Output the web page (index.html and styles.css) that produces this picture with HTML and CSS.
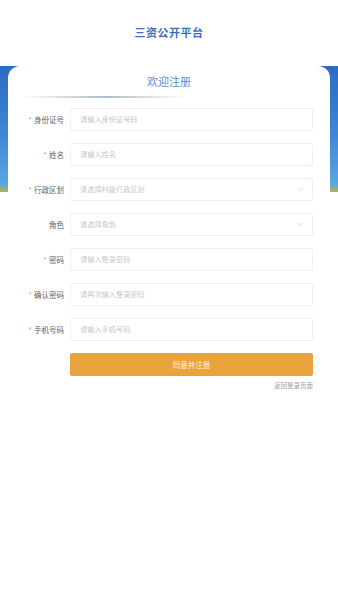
FILE: index.html
```html
<!DOCTYPE html>
<html lang="zh">
<head>
  <meta charset="UTF-8" />
  <meta name="viewport" content="width=device-width, initial-scale=1.0" />
  <title>三资公开平台 - 注册</title>
  <link rel="stylesheet" href="styles.css">
</head>
<body>
  <div class="top">三资公开平台</div>

  <div class="stage">
    <div class="card">
      <div class="welcome">欢迎注册</div>
      <div class="line"></div>

      <div class="row">
        <label><span class="req">*</span>身份证号</label>
        <div class="field"><span class="ph">请输入身份证号码</span></div>
      </div>
      <div class="row">
        <label><span class="req">*</span>姓名</label>
        <div class="field"><span class="ph">请输入姓名</span></div>
      </div>
      <div class="row">
        <label><span class="req">*</span>行政区划</label>
        <div class="field"><span class="ph">请选择村级行政区划</span>
          <svg class="arrow" width="7" height="5" viewBox="0 0 7 5"><path d="M0.5 1 L3.5 4 L6.5 1" fill="none" stroke="#cfcfcf" stroke-width="0.8"/></svg>
        </div>
      </div>
      <div class="row">
        <label>角色</label>
        <div class="field"><span class="ph">请选择角色</span>
          <svg class="arrow" width="7" height="5" viewBox="0 0 7 5"><path d="M0.5 1 L3.5 4 L6.5 1" fill="none" stroke="#cfcfcf" stroke-width="0.8"/></svg>
        </div>
      </div>
      <div class="row">
        <label><span class="req">*</span>密码</label>
        <div class="field"><span class="ph">请输入登录密码</span></div>
      </div>
      <div class="row">
        <label><span class="req">*</span>确认密码</label>
        <div class="field"><span class="ph">请再次输入登录密码</span></div>
      </div>
      <div class="row">
        <label><span class="req">*</span>手机号码</label>
        <div class="field"><span class="ph">请输入手机号码</span></div>
      </div>

      <div class="row">
        <span></span>
        <button class="submit">同意并注册</button>
      </div>
      <div class="back">返回登录页面</div>
    </div>
  </div>
</body>
</html>
```

FILE: styles.css
```css
body {
  margin: 0;
  font-family: "Noto Sans CJK SC", "Noto Sans", sans-serif;
  background-color: #fff;
  color: #555;
}
.top {
  height: 66px;
  line-height: 64px;
  text-align: center;
  font-size: 11px;
  font-weight: bold;
  color: #3871b3;
  letter-spacing: 0.5px;
}
.stage {
  padding: 0 8px;
  background: linear-gradient(to bottom, #2c6bbf 0%, #3d88d5 55%, #5ba6e4 94%, #9bb36a 98%, #b9aa66 100%) no-repeat;
  background-size: 100% 126px;
}
.card {
  background-color: #fff;
  border-radius: 12px 12px 0 0;
  padding: 8px 17px 20px 0;
  min-height: 420px;
}
.welcome {
  text-align: center;
  font-size: 11px;
  line-height: 14px;
  color: #5a8fc4;
  padding-left: 17px;
}
.line {
  height: 1.5px;
  margin: 8px 0 10px 14px;
  width: 166px;
  background: linear-gradient(to right, rgba(140, 160, 180, 0), rgba(110, 135, 160, 0.55) 50%, rgba(140, 160, 180, 0));
}
.row {
  display: grid;
  grid-template-columns: 56px 1fr;
  column-gap: 6px;
  align-items: center;
  margin-bottom: 12px;
}
.row label {
  text-align: right;
  font-size: 7.5px;
  color: #606266;
}
.req {
  color: #f08a8a;
  margin-right: 2px;
}
.field {
  height: 23px;
  box-sizing: border-box;
  border: 1px solid #f0f0f0;
  border-radius: 2px;
  display: flex;
  align-items: center;
  justify-content: space-between;
  padding: 0 8px 0 9px;
}
.ph {
  font-size: 7.2px;
  color: #c8c8c8;
}
.submit {
  height: 23px;
  border: none;
  border-radius: 2px;
  background-color: #e8a33c;
  color: #fdf3e4;
  font-family: inherit;
  font-size: 7.5px;
  padding: 0;
}
.back {
  text-align: right;
  font-size: 6.5px;
  color: #a0a0a0;
  margin-top: -8px;
}
```
